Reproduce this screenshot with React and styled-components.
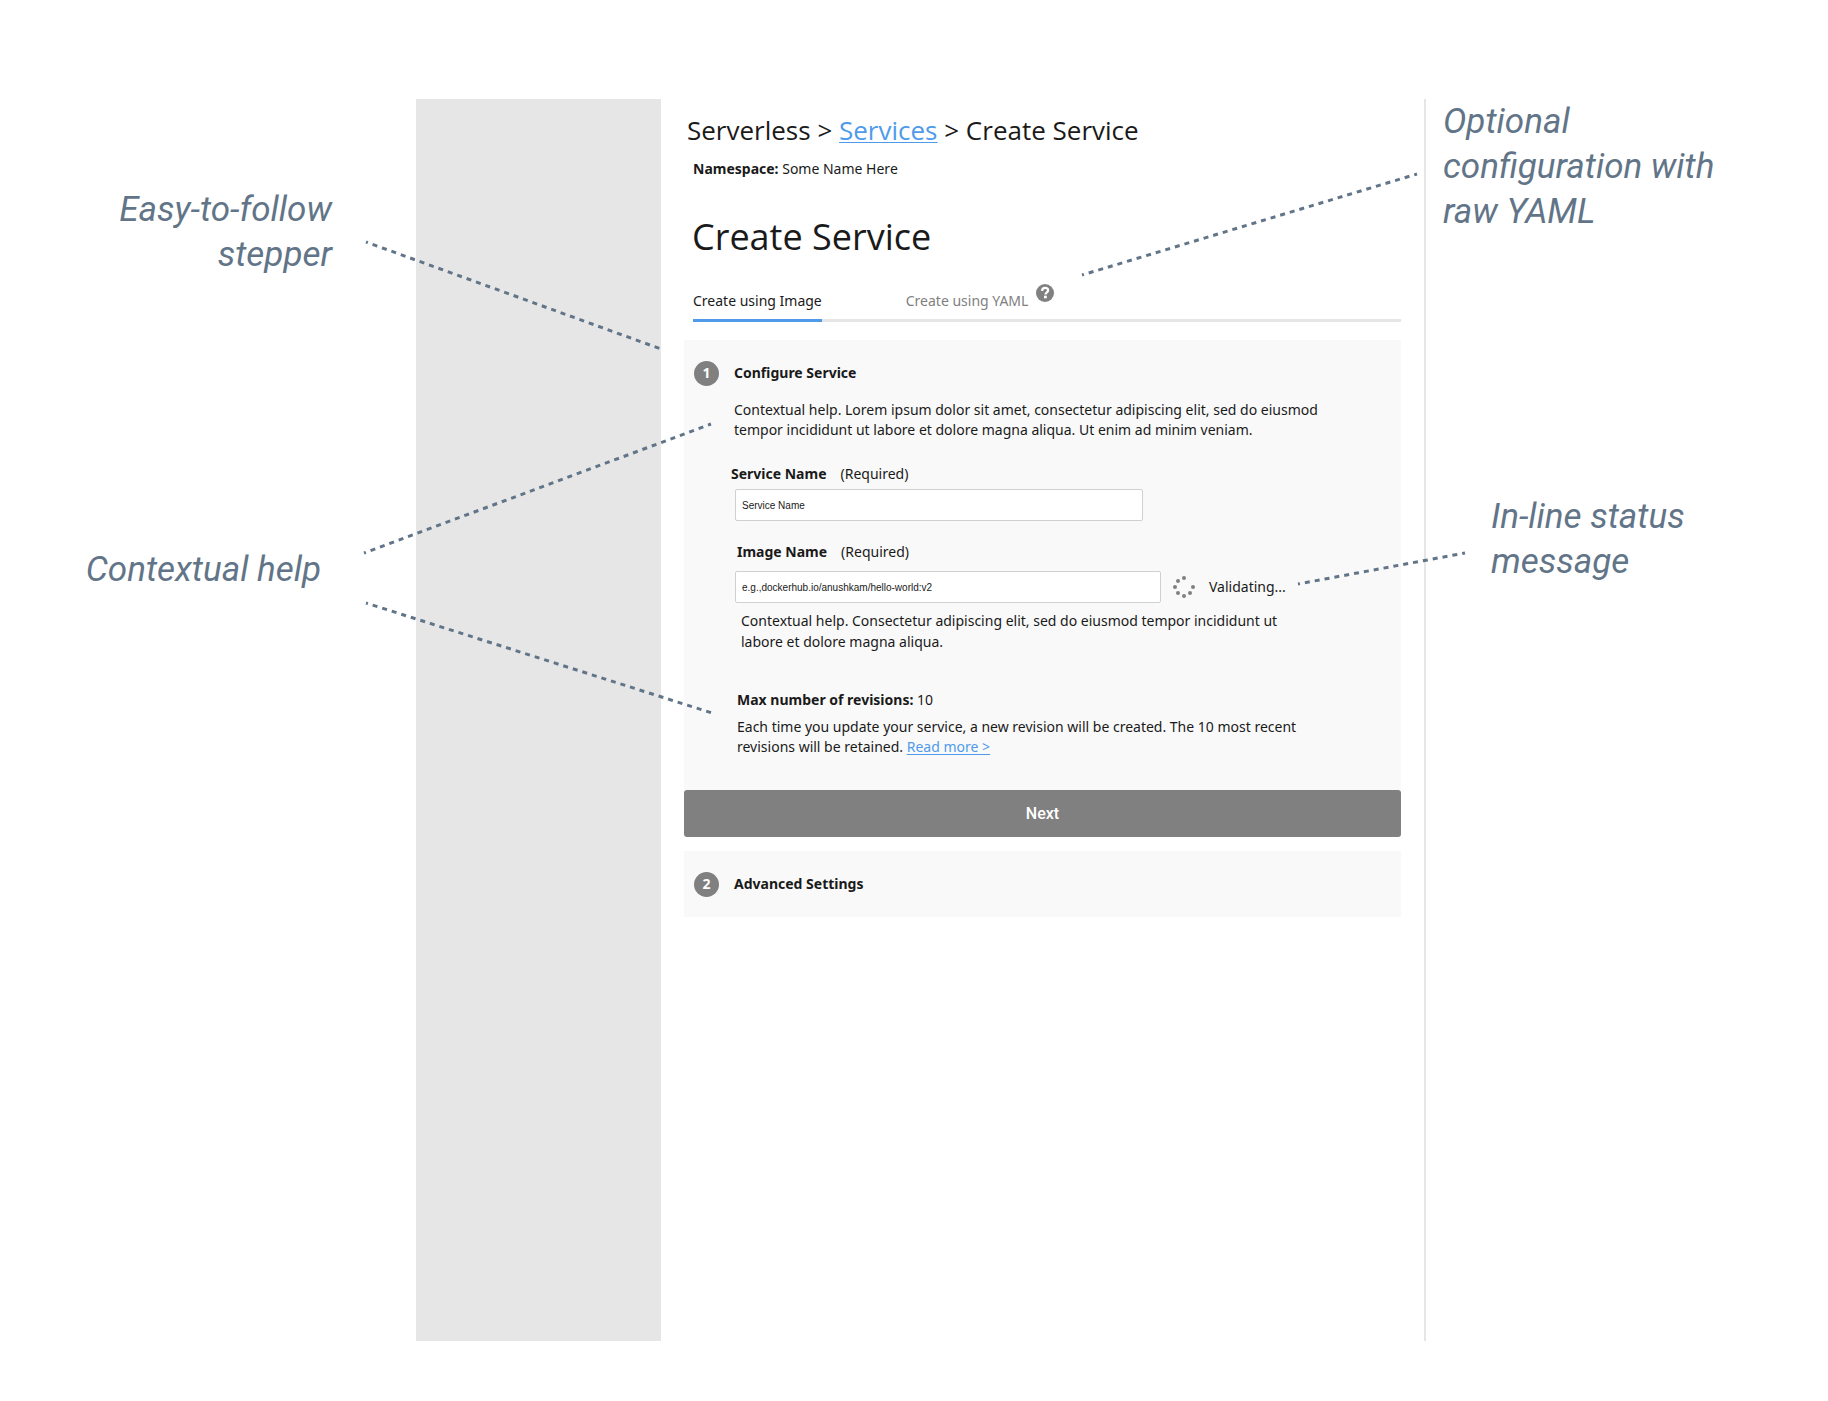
import React from "react";
import styled, { createGlobalStyle } from "styled-components";

const GlobalStyle = createGlobalStyle`
  *, *::before, *::after { box-sizing: border-box; }
  body {
    margin: 0;
    background: #fff;
    color: #1a1a1a;
    font-family: "Noto Sans", "Open Sans", sans-serif;
    font-size: 14px;
    line-height: 20px;
  }
  h1, h2, p { margin: 0; }
`;

const Page = styled.div`
  display: flex;
  flex-direction: column;
  min-height: 100vh;
  padding: 99px 0 60px;
`;

const Board = styled.div`
  position: relative;
  flex: 1;
  display: grid;
  grid-template-columns: 416fr 1010fr 402fr;
`;

const Notes = styled.aside`
  display: flex;
  flex-direction: column;
  align-items: ${(p) => (p.$side === "left" ? "flex-end" : "flex-start")};
  gap: ${(p) => p.$gap};
  padding: ${(p) => p.$padding};
  text-align: ${(p) => (p.$side === "left" ? "right" : "left")};
`;

const Note = styled.p`
  padding: ${(p) => p.$padding || "0"};
  max-width: 360px;
  color: #627588;
  font: italic 400 35px/45px Roboto, sans-serif;
`;

const Connectors = styled.svg`
  position: absolute;
  top: 0;
  left: 0;
  width: 100%;
  height: 700px;
  pointer-events: none;

  line {
    stroke: #627588;
    stroke-width: 3px;
    stroke-dasharray: 5 5;
    stroke-dashoffset: 3px;
    vector-effect: non-scaling-stroke;
  }
`;

const Frame = styled.div`
  display: flex;
  border-right: 2px solid #e6e6e6;
`;

const Sidebar = styled.div`
  flex: 0 0 245px;
  background: #e6e6e6;
`;

const Main = styled.main`
  flex: 1;
  min-width: 0;
  padding: 13px 23px 40px;
`;

const Breadcrumb = styled.nav`
  padding-left: 3px;
  font-family: "Open Sans", "Noto Sans", sans-serif;
  font-size: 26px;
  line-height: 36px;
`;

const Link = styled.a`
  color: #4f9bea;
  text-decoration: underline;
  text-decoration-thickness: 1px;
  text-underline-offset: 2px;
`;

const Namespace = styled.p`
  padding: 11px 0 0 9px;
`;

const Title = styled.h1`
  padding: 34px 0 0 8px;
  font-family: "Open Sans", "Noto Sans", sans-serif;
  font-size: 36px;
  font-weight: 400;
  line-height: 48px;
`;

const Tabs = styled.div`
  display: flex;
  gap: 84px;
  margin: 22px 0 18px 9px;
  border-bottom: 3px solid #e6e6e6;
`;

const Tab = styled.button`
  display: flex;
  gap: 8px;
  height: 39px;
  margin-bottom: -3px;
  padding: 8px 0 0;
  border: 0;
  border-bottom: 3px solid ${(p) => (p.$active ? "#4f9bea" : "transparent")};
  background: none;
  color: ${(p) => (p.$active ? "#1a1a1a" : "#808080")};
  font: inherit;
`;

const HelpIcon = styled.svg`
  width: 18px;
  height: 18px;
  margin-top: -7px;
`;

const Panel = styled.section`
  padding: 20px 10px;
  background: #f9f9f9;
`;

const StepHeader = styled.div`
  display: flex;
  align-items: center;
  gap: 15px;
  min-height: 26px;
`;

const StepNumber = styled.span`
  display: flex;
  align-items: center;
  justify-content: center;
  width: 25px;
  height: 25px;
  border-radius: 50%;
  background: #808080;
  color: #fff;
  font-weight: 700;
`;

const StepTitle = styled.h2`
  font-size: 14px;
  font-weight: 700;
  line-height: 20px;
`;

const StepBody = styled.div`
  padding: 14px 0 13px 37px;
`;

const Help = styled.p`
  max-width: ${(p) => p.$width || "600px"};
  padding: ${(p) => p.$padding || "0"};
  line-height: ${(p) => p.$leading || "20px"};
`;

const Field = styled.div`
  padding-top: ${(p) => p.$space};
`;

const Label = styled.label`
  display: flex;
  gap: 14px;
  padding-left: ${(p) => p.$indent || "0"};
  margin-bottom: ${(p) => p.$gap};
`;

const InputRow = styled.div`
  display: flex;
  align-items: center;
  padding-left: 4px;
`;

const Input = styled.input`
  width: ${(p) => p.$width};
  height: 32px;
  padding: 0 6px;
  border: 1px solid #d0d0d0;
  border-radius: 2px;
  background: #fff;
  font: 10px "Liberation Sans", Arial, sans-serif;

  &::placeholder {
    color: #1a1a1a;
    opacity: 1;
  }
`;

const Status = styled.span`
  display: flex;
  align-items: center;
  gap: 14px;
  padding-left: 12px;
`;

const Revisions = styled.div`
  display: flex;
  flex-direction: column;
  gap: 7px;
  padding: 38px 0 0 6px;
`;

const NextButton = styled.button`
  display: block;
  width: 100%;
  height: 47px;
  margin-bottom: 14px;
  border: 0;
  border-radius: 3px;
  background: #808080;
  color: #fff;
  font: 500 16px Roboto, sans-serif;
`;

const lines = [
  [366, 143, 661, 250],
  [364, 454, 711, 325],
  [366, 504, 712, 614],
  [1082, 176, 1417, 75],
  [1298, 485, 1465, 454],
];

const dots = [
  [11, 2],
  [5, 5],
  [2, 11],
  [5, 17],
  [11, 20],
  [17, 17],
  [20, 11],
];

function Spinner() {
  return (
    <svg width="22" height="22" viewBox="0 0 22 22" fill="#808080" aria-hidden="true">
      {dots.map(([x, y]) => (
        <circle key={`${x}-${y}`} cx={x} cy={y} r="2" />
      ))}
    </svg>
  );
}

function QuestionIcon() {
  return (
    <HelpIcon viewBox="0 0 18 18" aria-hidden="true">
      <circle cx="9" cy="9" r="9" fill="#808080" />
      <path
        d="M6 6.8C6.2 4.9 7.4 3.9 9.1 3.9c1.8 0 3 1 3 2.5 0 2-2.5 2-2.5 4"
        fill="none"
        stroke="#fff"
        strokeWidth="2.3"
      />
      <rect x="8" y="11.7" width="2.8" height="2.6" fill="#fff" />
    </HelpIcon>
  );
}

export default function App() {
  return (
    <Page>
      <GlobalStyle />
      <Board>
        <Notes $side="left" $gap="270px" $padding="88px 0 0">
          <Note $padding="0 84px 0 0">
            Easy-to-follow
            <br />
            stepper
          </Note>
          <Note $padding="0 95px 0 0">Contextual help</Note>
        </Notes>

        <Frame>
          <Sidebar />
          <Main>
            <Breadcrumb aria-label="Breadcrumb">
              Serverless &gt; <Link href="#services">Services</Link> &gt; Create Service
            </Breadcrumb>
            <Namespace>
              <b>Namespace:</b> Some Name Here
            </Namespace>
            <Title>Create Service</Title>

            <Tabs role="tablist">
              <Tab type="button" role="tab" aria-selected="true" $active>
                Create using Image
              </Tab>
              <Tab type="button" role="tab" aria-selected="false">
                Create using YAML
                <QuestionIcon />
              </Tab>
            </Tabs>

            <Panel>
              <StepHeader>
                <StepNumber>1</StepNumber>
                <StepTitle>Configure Service</StepTitle>
              </StepHeader>
              <StepBody>
                <Help $padding="0 0 0 3px">
                  Contextual help. Lorem ipsum dolor sit amet, consectetur adipiscing elit, sed do
                  eiusmod tempor incididunt ut labore et dolore magna aliqua. Ut enim ad minim
                  veniam.
                </Help>

                <Field $space="24px">
                  <Label htmlFor="service-name" $gap="5px">
                    <b>Service Name</b>
                    <span>(Required)</span>
                  </Label>
                  <InputRow>
                    <Input id="service-name" type="text" placeholder="Service Name" $width="408px" />
                  </InputRow>
                </Field>

                <Field $space="21px">
                  <Label htmlFor="image-name" $gap="9px" $indent="6px">
                    <b>Image Name</b>
                    <span>(Required)</span>
                  </Label>
                  <InputRow>
                    <Input
                      id="image-name"
                      type="text"
                      placeholder="e.g.,dockerhub.io/anushkam/hello-world:v2"
                      $width="426px"
                    />
                    <Status role="status">
                      <Spinner />
                      Validating...
                    </Status>
                  </InputRow>
                </Field>

                <Help $padding="7px 0 0 10px" $width="570px" $leading="21px">
                  Contextual help. Consectetur adipiscing elit, sed do eiusmod tempor incididunt ut
                  labore et dolore magna aliqua.
                </Help>

                <Revisions>
                  <p>
                    <b>Max number of revisions:</b> 10
                  </p>
                  <Help>
                    Each time you update your service, a new revision will be created. The 10 most
                    recent revisions will be retained. <Link href="#revisions">Read more &gt;</Link>
                  </Help>
                </Revisions>
              </StepBody>
            </Panel>
            <NextButton type="button">Next</NextButton>

            <Panel>
              <StepHeader>
                <StepNumber>2</StepNumber>
                <StepTitle>Advanced Settings</StepTitle>
              </StepHeader>
            </Panel>
          </Main>
        </Frame>

        <Notes $side="right" $gap="260px" $padding="0 0 0 17px">
          <Note>
            Optional
            <br />
            configuration with
            <br />
            raw YAML
          </Note>
          <Note $padding="0 0 0 48px">
            In-line status
            <br />
            message
          </Note>
        </Notes>

        <Connectors viewBox="0 0 1828 700" preserveAspectRatio="none" aria-hidden="true">
          {lines.map(([x1, y1, x2, y2]) => (
            <line key={`${x1}-${y1}`} x1={x1} y1={y1} x2={x2} y2={y2} />
          ))}
        </Connectors>
      </Board>
    </Page>
  );
}
